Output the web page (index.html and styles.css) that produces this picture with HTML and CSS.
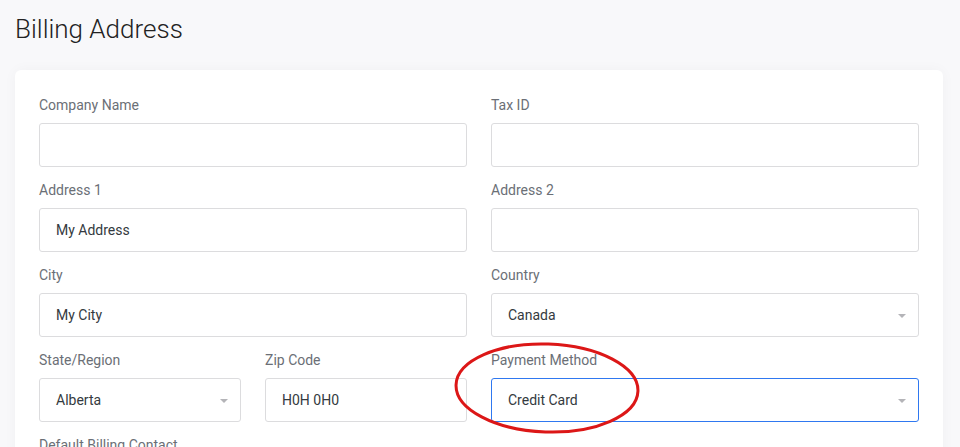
FILE: index.html
```html
<!DOCTYPE html>
<html>
<head>
<meta charset="utf-8">
<link rel="stylesheet" href="styles.css">
</head>
<body>
<h1 class="title">Billing Address</h1>
<div class="card">
  <div class="grid">
    <div class="field">
      <label class="label">Company Name</label>
      <div class="input"></div>
    </div>
    <div class="field">
      <label class="label">Tax ID</label>
      <div class="input"></div>
    </div>
    <div class="field">
      <label class="label">Address 1</label>
      <div class="input">My Address</div>
    </div>
    <div class="field">
      <label class="label">Address 2</label>
      <div class="input"></div>
    </div>
    <div class="field">
      <label class="label">City</label>
      <div class="input">My City</div>
    </div>
    <div class="field">
      <label class="label">Country</label>
      <div class="input select">Canada<span class="caret"></span></div>
    </div>
    <div class="split">
      <div class="field">
        <label class="label">State/Region</label>
        <div class="input select">Alberta<span class="caret"></span></div>
      </div>
      <div class="field">
        <label class="label">Zip Code</label>
        <div class="input">H0H 0H0</div>
      </div>
    </div>
    <div class="field">
      <label class="label">Payment Method</label>
      <div class="input select focus">Credit Card<span class="caret"></span></div>
    </div>
    <div class="field">
      <label class="label">Default Billing Contact</label>
      <div class="input select"><span class="caret"></span></div>
    </div>
  </div>
</div>
<svg class="annot" width="960" height="447" viewBox="0 0 960 447">
  <ellipse cx="547" cy="388" rx="91" ry="44" fill="none" stroke="#dc1717" stroke-width="3" transform="rotate(2 547 388)"/>
</svg>
</body>
</html>
```
FILE: styles.css
```css
html, body {
  margin: 0;
  padding: 0;
  background: #f8f8fa;
  height: 447px;
  overflow: hidden;
}
body {
  padding: 0 17px 0 15px;
  font-family: Roboto, "Liberation Sans", sans-serif;
  position: relative;
}
.title {
  margin: 0;
  padding-top: 14px;
  font-size: 26px;
  line-height: 30px;
  font-weight: 300;
  color: #222;
}
.card {
  margin-top: 26px;
  background: #fff;
  border-radius: 6px;
  box-shadow: 0 0 14px rgba(0, 0, 0, 0.035);
  padding: 27px 24px 24px 24px;
}
.grid {
  display: grid;
  grid-template-columns: 1fr 1fr;
  column-gap: 24px;
  row-gap: 15px;
}
.split {
  display: grid;
  grid-template-columns: 202px 1fr;
  column-gap: 24px;
}
.field {
  display: flex;
  flex-direction: column;
}
.label {
  font-size: 14px;
  line-height: 17px;
  color: #6b6f76;
  margin-bottom: 9px;
}
.input {
  box-sizing: border-box;
  height: 44px;
  border: 1px solid #dcdcde;
  border-radius: 3px;
  padding: 0 16px;
  display: flex;
  align-items: center;
  font-size: 14px;
  color: #343a40;
  position: relative;
}
.select .caret {
  position: absolute;
  right: 12px;
  top: 20px;
  width: 0;
  height: 0;
  border-left: 4px solid transparent;
  border-right: 4px solid transparent;
  border-top: 4px solid #b4b4b8;
}
.focus {
  border-color: #2f78f0;
}
.annot {
  position: absolute;
  left: 0;
  top: 0;
  pointer-events: none;
}
```
